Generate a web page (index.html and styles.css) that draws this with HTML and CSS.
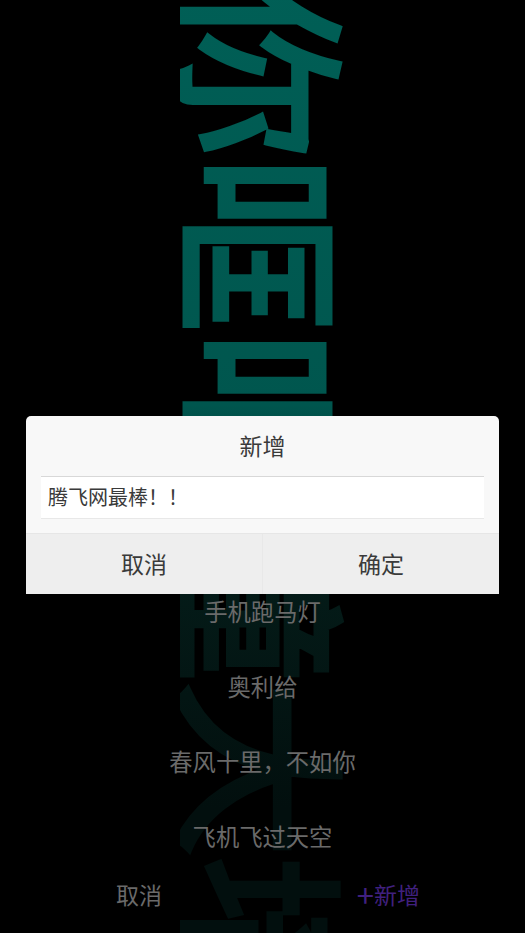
FILE: index.html
```html
<!DOCTYPE html>
<html lang="zh-CN">
<head>
<meta charset="utf-8">
<title>新增</title>
<link rel="stylesheet" href="styles.css">
</head>
<body>
<div class="backdrop">
  <div class="backdrop-text">你哐哐撞大墙</div>
</div>
<main class="page">
  <ul class="list">
    <li>手机跑马灯</li>
    <li>奥利给</li>
    <li>春风十里，不如你</li>
    <li>飞机飞过天空</li>
  </ul>
  <div class="bar">
    <span class="bar-cancel">取消</span>
    <span class="bar-add"><span class="plus">+</span>新增</span>
  </div>
</main>
<section class="modal">
  <h2 class="modal-title">新增</h2>
  <div class="field">腾飞网最棒！！</div>
  <div class="actions">
    <div class="action">取消</div>
    <div class="action">确定</div>
  </div>
</section>
</body>
</html>
```
FILE: styles.css
```css
html, body {
  margin: 0;
  height: 933px;
  overflow: hidden;
  background: #000;
}
body {
  position: relative;
  font-family: "Noto Sans CJK SC", "Liberation Sans", sans-serif;
}
.backdrop {
  position: absolute;
  inset: 0;
  overflow: hidden;
  display: flex;
  justify-content: center;
  padding-left: 10px;
  box-sizing: border-box;
}
.backdrop-text {
  margin-top: -19px;
  height: 1060px;
  flex: none;
  writing-mode: vertical-rl;
  text-orientation: sideways;
  white-space: nowrap;
  font-size: 177px;
  line-height: 175px;
  letter-spacing: -2px;
  -webkit-text-stroke: 5px transparent;
  background: linear-gradient(to bottom, #005f56 0%, #00564e 40%, #041b18 57%, #020f0e 78%);
  -webkit-background-clip: text;
  background-clip: text;
  color: transparent;
}
.page {
  position: relative;
  height: 933px;
  display: flex;
  flex-direction: column;
  justify-content: flex-end;
}
.list {
  list-style: none;
  margin: 0;
  padding: 0;
}
.list li {
  height: 75px;
  line-height: 75px;
  text-align: center;
  font-size: 23.3px;
  color: #6a6a6a;
}
.bar {
  height: 39px;
  padding: 0 105px 20px 116px;
  display: flex;
  justify-content: space-between;
  align-items: center;
  font-size: 23px;
}
.bar-cancel { color: #6a6a6a; }
.bar-add { color: #40207f; display: flex; align-items: center; }
.plus { font-size: 31px; line-height: 1; }
.modal {
  position: absolute;
  left: 26px;
  top: 416px;
  width: 473px;
  height: 178px;
  display: flex;
  flex-direction: column;
  background: #f8f8f8;
  border-radius: 5px 5px 0 0;
  color: #3a3a3a;
}
.modal-title {
  margin: 0;
  height: 60px;
  line-height: 58px;
  text-align: center;
  font-size: 23px;
  font-weight: 400;
}
.field {
  margin: 0 15px;
  height: 41px;
  line-height: 40px;
  padding-left: 7px;
  background: #fff;
  border-top: 1px solid #d8d8d8;
  border-bottom: 1px solid #e8e8e8;
  font-size: 20px;
}
.actions {
  margin-top: 14px;
  flex: 1;
  display: flex;
  border-top: 1px solid #e6e6e6;
  background: #eeeeee;
}
.action {
  flex: 1;
  text-align: center;
  line-height: 58px;
  font-size: 23px;
}
.action + .action {
  border-left: 1px solid #e8e8e8;
}
```
